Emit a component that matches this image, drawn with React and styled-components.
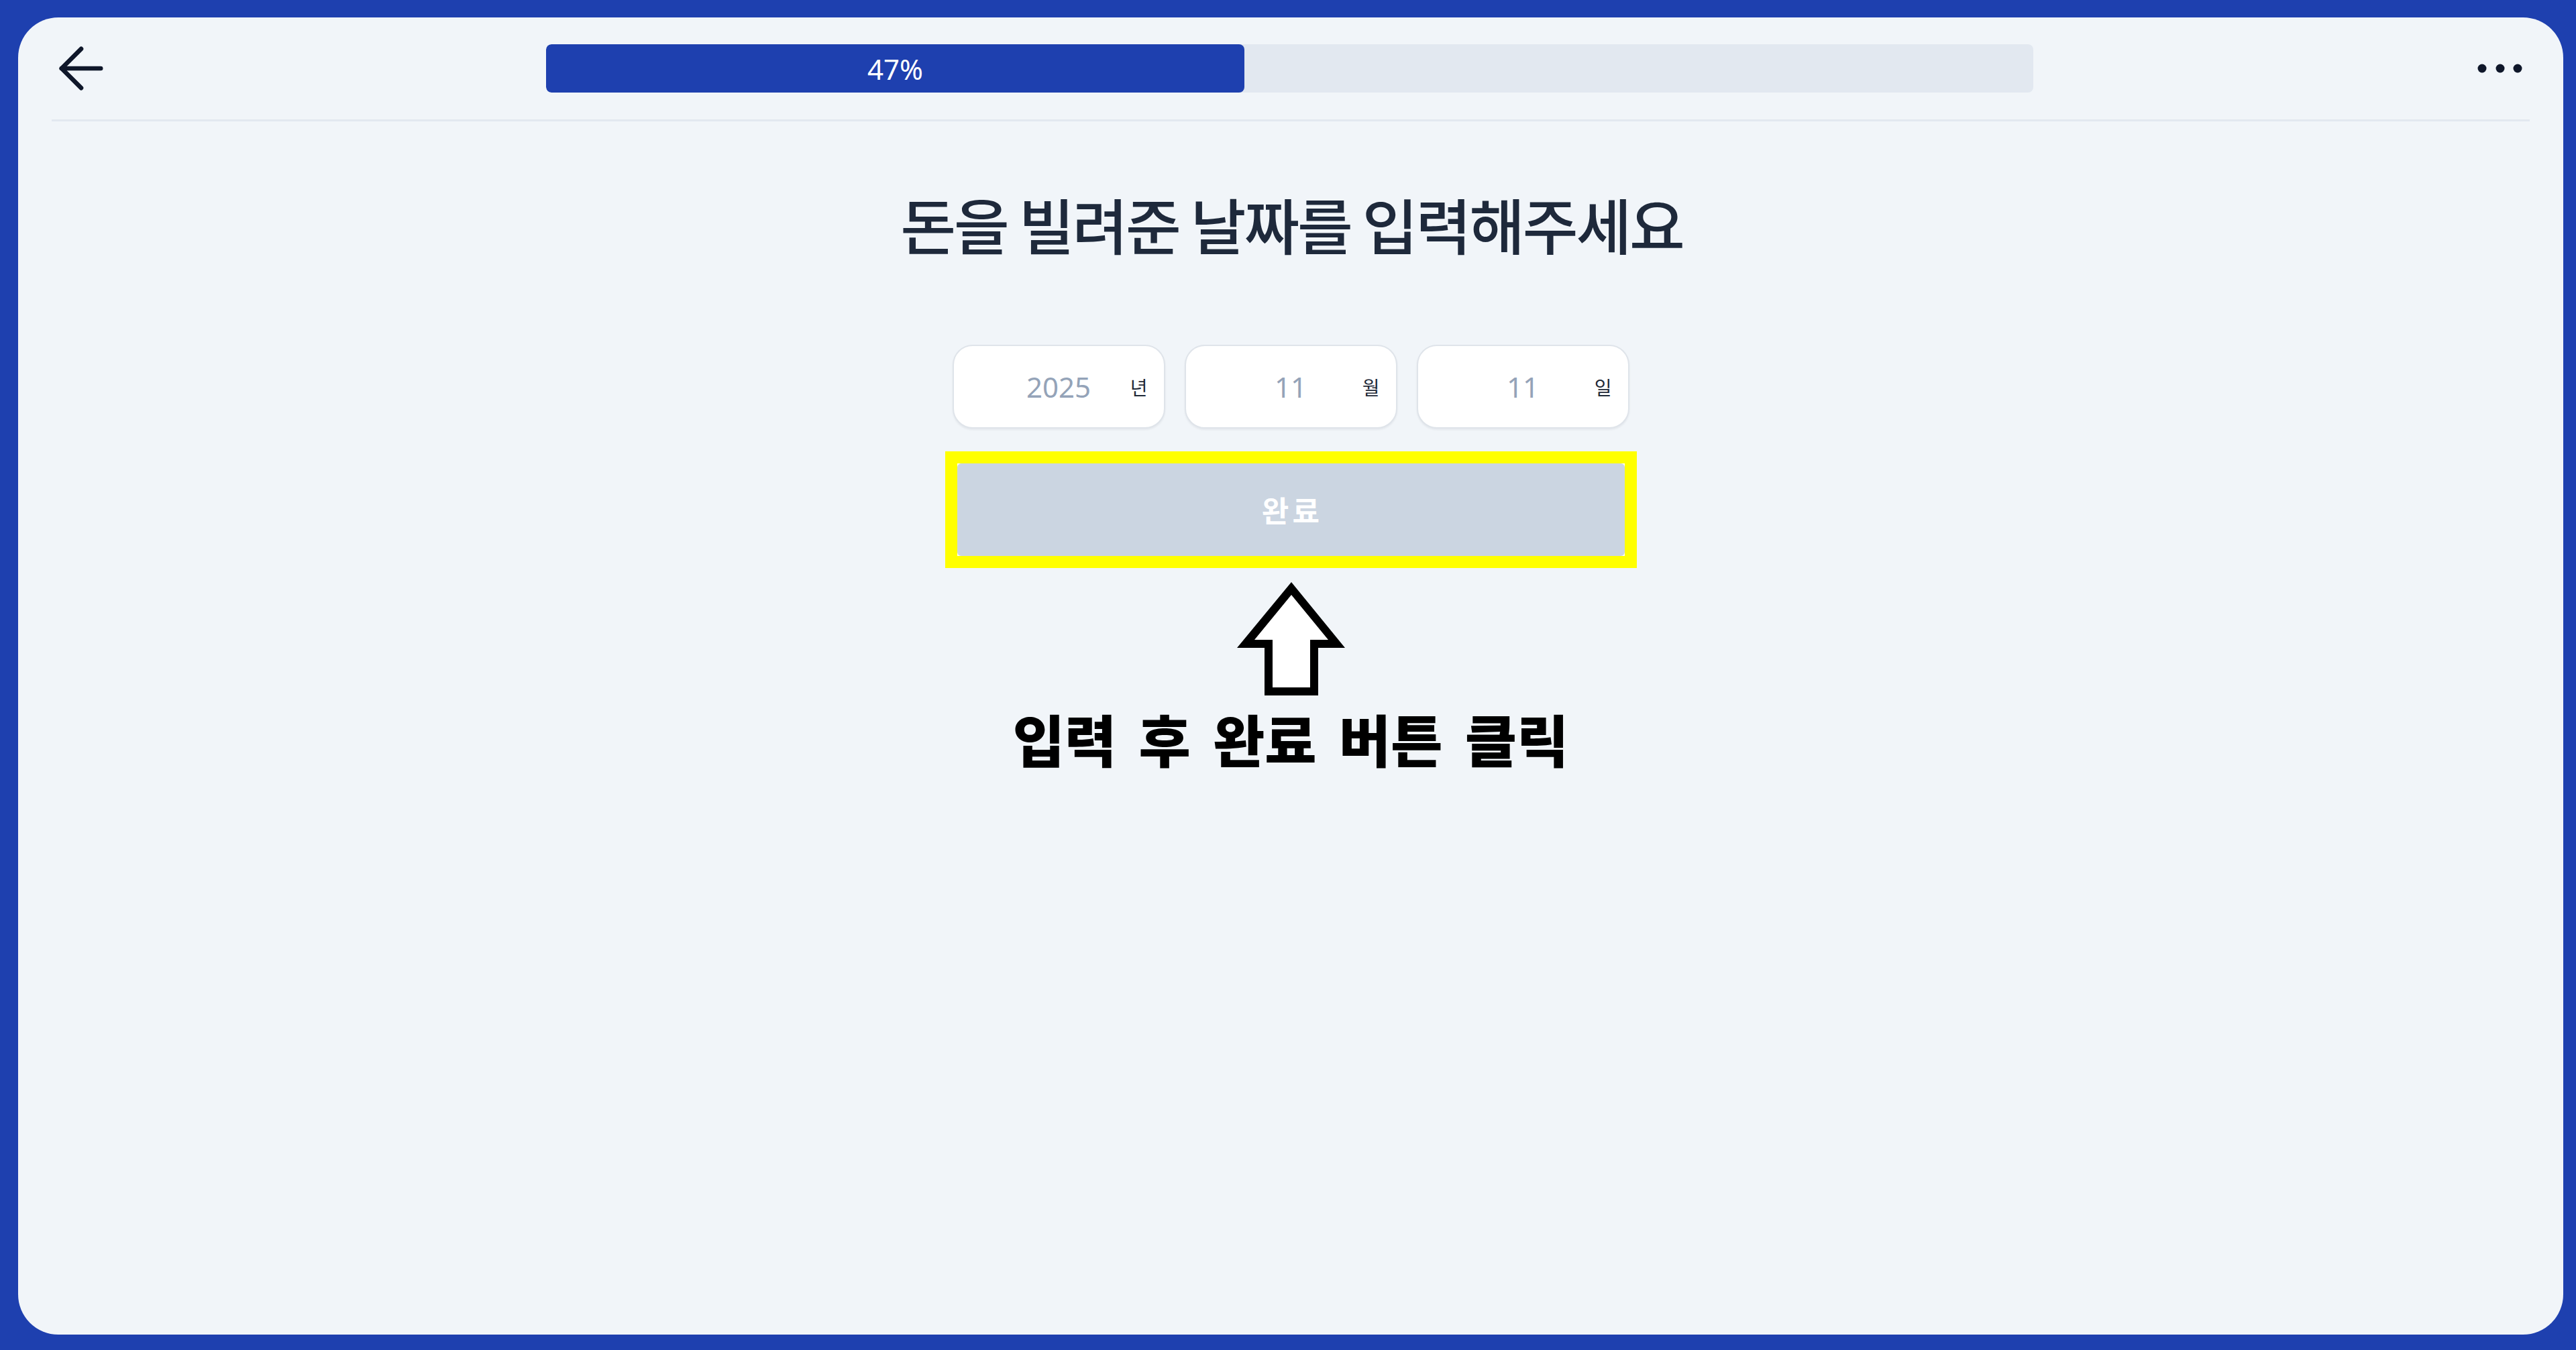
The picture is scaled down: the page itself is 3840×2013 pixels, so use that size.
import React from "react";
import styled, { createGlobalStyle } from "styled-components";

const GlobalStyle = createGlobalStyle`
  html, body {
    margin: 0;
    padding: 0;
    height: 100%;
  }
  body {
    background: #1e40af;
    font-family: "Noto Sans", "Noto Sans CJK KR", sans-serif;
  }
  #root {
    height: 100%;
  }
`;

const Frame = styled.div`
  box-sizing: border-box;
  height: 100vh;
  padding: 26px 19px 23px 27px;
  display: flex;
`;

const Card = styled.div`
  flex: 1;
  background: #f1f5f9;
  border-radius: 60px;
  display: flex;
  flex-direction: column;
  overflow: hidden;
`;

const Header = styled.header`
  box-sizing: border-box;
  height: 152px;
  display: grid;
  grid-template-columns: 1fr 2217px 1fr;
  align-items: center;
  padding: 0 48px 0 44px;
`;

const IconButton = styled.button`
  justify-self: ${(p) => (p.$end ? "end" : "start")};
  display: flex;
  align-items: center;
  justify-content: center;
  padding: 0;
  border: none;
  background: transparent;
  color: #0f172a;
  cursor: pointer;
`;

const Track = styled.div`
  height: 72px;
  background: #e2e8f0;
  border-radius: 8px;
  overflow: hidden;
  display: flex;
`;

const Fill = styled.div`
  height: 100%;
  background: #1e40af;
  border-radius: 8px;
  display: flex;
  align-items: center;
  justify-content: center;
  color: #ffffff;
  font-size: 42px;
  font-family: "Noto Sans", sans-serif;
`;

const Divider = styled.div`
  height: 3px;
  background: #e2e8f0;
  margin: 0 50px;
`;

const Main = styled.main`
  display: flex;
  flex-direction: column;
  align-items: center;
  padding-top: 98px;
`;

const Title = styled.h1`
  margin: 0;
  padding-left: 0.035em;
  font-size: 90px;
  line-height: 108px;
  font-weight: 500;
  letter-spacing: -0.035em;
  color: #1e293b;
  font-family: "Noto Sans CJK KR", sans-serif;
`;

const Fields = styled.div`
  display: flex;
  gap: 29px;
  margin-top: 127px;
`;

const Field = styled.label`
  position: relative;
  box-sizing: border-box;
  width: 317px;
  height: 125px;
  background: #ffffff;
  border: 2px solid #dfe4ea;
  border-radius: 30px;
  box-shadow: 0 2px 3px rgba(15, 23, 42, 0.06);
  display: flex;
`;

const Input = styled.input`
  width: 100%;
  height: 100%;
  border: none;
  padding: 0;
  background: transparent;
  text-align: center;
  font-size: 42px;
  font-family: "Noto Sans", sans-serif;
  color: #94a3b8;
  outline: none;
  &::placeholder {
    color: #94a3b8;
  }
`;

const Unit = styled.span`
  position: absolute;
  right: 24px;
  top: 50%;
  transform: translateY(-50%);
  font-size: 28px;
  color: #1f2937;
  font-family: "Noto Sans CJK KR", sans-serif;
`;

const Highlight = styled.div`
  margin-top: 34px;
  border: 18px solid #ffff00;
  background: #ffffff;
  display: flex;
`;

const SubmitButton = styled.button`
  width: 995px;
  height: 138px;
  border: none;
  border-radius: 6px;
  background: #cbd5e1;
  color: #ffffff;
  font-size: 44px;
  font-weight: 600;
  letter-spacing: 0.12em;
  padding: 0 0 0 0.12em;
  font-family: "Noto Sans CJK KR", sans-serif;
`;

const PointerArrow = styled.svg`
  margin-top: 21px;
  display: block;
`;

const Annotation = styled.p`
  margin: 14px 0 0;
  font-size: 84px;
  line-height: 100px;
  font-weight: 900;
  word-spacing: 14px;
  color: #000000;
  font-family: "Noto Sans CJK KR", sans-serif;
`;

const BackIcon = () => (
  <svg width="100" height="100" viewBox="0 0 24 24" fill="none" stroke="currentColor" strokeWidth="1.6" strokeLinecap="round" strokeLinejoin="round">
    <path d="m12 19-7-7 7-7" />
    <path d="M19 12H5" />
  </svg>
);

const MoreIcon = () => (
  <svg width="80" height="20" viewBox="0 0 80 20">
    <circle cx="7" cy="10" r="6.5" fill="#0f172a" />
    <circle cx="34" cy="10" r="6.5" fill="#0f172a" />
    <circle cx="60" cy="10" r="6.5" fill="#0f172a" />
  </svg>
);

const fields = [
  { placeholder: "2025", unit: "년" },
  { placeholder: "11", unit: "월" },
  { placeholder: "11", unit: "일" },
];

export default function App() {
  const progress = 47;
  return (
    <>
      <GlobalStyle />
      <Frame>
        <Card>
          <Header>
            <IconButton aria-label="뒤로">
              <BackIcon />
            </IconButton>
            <Track>
              <Fill style={{ width: `${progress}%` }}>{progress}%</Fill>
            </Track>
            <IconButton $end aria-label="더보기">
              <MoreIcon />
            </IconButton>
          </Header>
          <Divider />
          <Main>
            <Title>돈을 빌려준 날짜를 입력해주세요</Title>
            <Fields>
              {fields.map((f) => (
                <Field key={f.unit}>
                  <Input inputMode="numeric" placeholder={f.placeholder} />
                  <Unit>{f.unit}</Unit>
                </Field>
              ))}
            </Fields>
            <Highlight>
              <SubmitButton>완료</SubmitButton>
            </Highlight>
            <PointerArrow width="161" height="169" viewBox="0 0 161 169">
              <polygon points="81,0 161,98 121,98 121,169 41,169 41,98 0,98" fill="#000" />
              <polygon points="81,19 136,86 109,86 109,157 53,157 53,86 26,86" fill="#fff" />
            </PointerArrow>
            <Annotation>입력 후 완료 버튼 클릭</Annotation>
          </Main>
        </Card>
      </Frame>
    </>
  );
}
